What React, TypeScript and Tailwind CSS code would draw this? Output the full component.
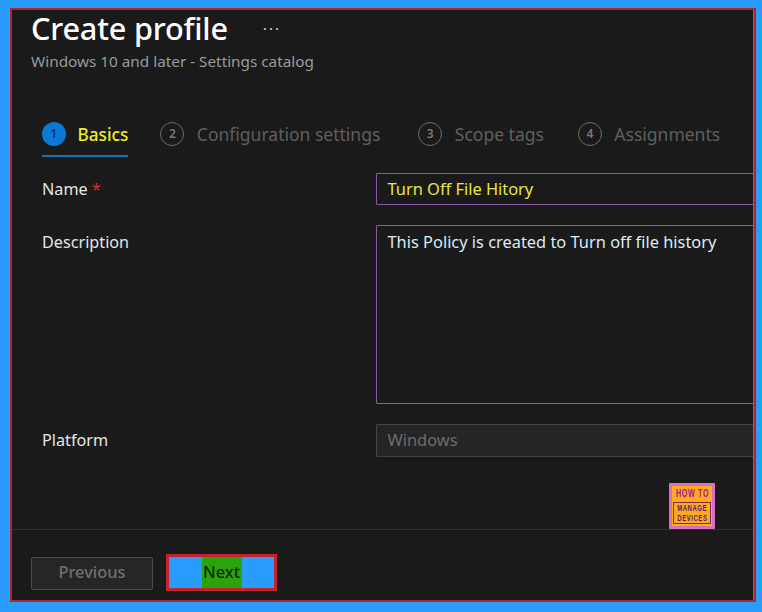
export default function App() {
  const font = "font-['Noto_Sans','Open_Sans',sans-serif]";
  const Step = ({ n, label, active, ml }: { n: number; label: string; active?: boolean; ml: string }) => (
    <div className={`flex flex-col ${ml}`}>
      <div className={`flex items-center h-[30px] ${active ? "gap-[11.5px]" : "gap-[12.5px]"}`}>
        <div className={`w-[24px] h-[24px] rounded-full flex items-center justify-center text-[12px] ${active ? "bg-[#0b78d4] text-[#0d1b2a]" : "border-[1.5px] border-[#6a6a6a] text-[#777777] font-semibold"}`}>{n}</div>
        <span className={`leading-[24px] ${active ? "text-[17.2px] text-[#eded2e] font-medium pt-[2px]" : "text-[17.5px] text-[#5f5f5f]"}`}>{label}</span>
      </div>
      {active ? <div className="h-[2px] mt-[6px] bg-[#1273b8]" /> : null}
    </div>
  );
  return (
    <div className={`w-[762px] h-[612px] bg-[#2a9dfc] pt-[8px] pl-[10px] pr-[6px] pb-[10px] ${font}`}>
      <div className="w-full h-full border-[2px] border-[#b0262e] bg-[#1a1a1a]">
        <div className="h-full border-r border-[#3f7fc4] flex flex-col">
          <div className="pl-[19px] flex items-center h-[36px]">
            <h1 className="text-[30.7px] leading-[36px] font-medium text-white tracking-[-0.2px]">Create profile</h1>
            <span className="ml-[35px] text-[#d8d8d8] text-[15px] leading-[15px] tracking-[2px]">···</span>
          </div>
          <div className="pl-[19px] text-[15.3px] leading-[22px] text-[#9a9a9a] mt-[4px]">Windows 10 and later - Settings catalog</div>
          <div className="flex pl-[30px] mt-[47px] h-[52px]">
            <Step n={1} label="Basics" active ml="" />
            <Step n={2} label="Configuration settings" ml="ml-[32px]" />
            <Step n={3} label="Scope tags" ml="ml-[38px]" />
            <Step n={4} label="Assignments" ml="ml-[34px]" />
          </div>
          <div className="flex pl-[30px] mt-[2px]">
            <div className="w-[334px] text-[16.2px] leading-[24px] pt-[4px] text-[#e6e6e6]">Name <span className="text-[#e0272e]">*</span></div>
            <div className="flex-1 h-[32px] border border-[#8e5aa8] rounded-l-[2px] border-r-0 pl-[10.5px] text-[16.4px] leading-[29px] text-[#e8e83a]">Turn Off File Hitory</div>
          </div>
          <div className="flex pl-[30px] mt-[20px]">
            <div className="w-[334px] text-[16.2px] leading-[24px] pt-[5px] text-[#e6e6e6]">Description</div>
            <div className="flex-1 h-[179px] border border-[#8e5aa8] rounded-l-[2px] border-r-0 pl-[10.5px] pt-[1px] text-[16.4px] leading-[29px] text-[#dcecf2]">This Policy is created to Turn off file history</div>
          </div>
          <div className="flex pl-[30px] mt-[20px]">
            <div className="w-[334px] text-[16.2px] leading-[24px] pt-[4px] text-[#e6e6e6]">Platform</div>
            <div className="flex-1 h-[33px] bg-[#252525] border border-[#444444] rounded-l-[2px] border-r-0 pl-[10.5px] text-[16.4px] leading-[30px] text-[#6c6c6c]">Windows</div>
          </div>
          <div className="flex justify-end pr-[38px] mt-[26px]">
            <div className="w-[46px] h-[46px] bg-[#ffa91f] border-[3px] border-[#d76fc6] flex flex-col items-center font-['Liberation_Sans',sans-serif] font-bold text-[#a3149c]">
              <div className="text-[11px] leading-[11px] mt-[2px] tracking-[1px] scale-x-[0.65] whitespace-nowrap">HOW TO</div>
              <div className="mt-[3px] w-[38px] border border-[#7a2a50] flex flex-col items-center text-[9.5px] leading-[10px] text-[#5a1a70]">
                <span className="scale-x-[0.62] tracking-[1px] whitespace-nowrap">MANAGE</span>
                <span className="scale-x-[0.62] tracking-[1px] whitespace-nowrap">DEVICES</span>
              </div>
            </div>
          </div>
          <div className="border-t border-[#2e2e2e] flex-1 pl-[19px] pt-[24px] flex items-start gap-[13px]">
            <div className="w-[122px] h-[33px] mt-[3px] bg-[#262626] border border-[#4a4a4a] rounded-[2px] text-[16.4px] leading-[28px] text-center font-medium text-[#707070]">Previous</div>
            <div className="w-[111px] h-[37px] border-[3px] border-[#c4222c] bg-[#2a9dfc] flex justify-center">
              <div className="w-[40px] bg-[#2ba30c] text-[#0d2b0a] text-[16.4px] leading-[30px] text-center font-medium">Next</div>
            </div>
          </div>
        </div>
      </div>
    </div>
  );
}
